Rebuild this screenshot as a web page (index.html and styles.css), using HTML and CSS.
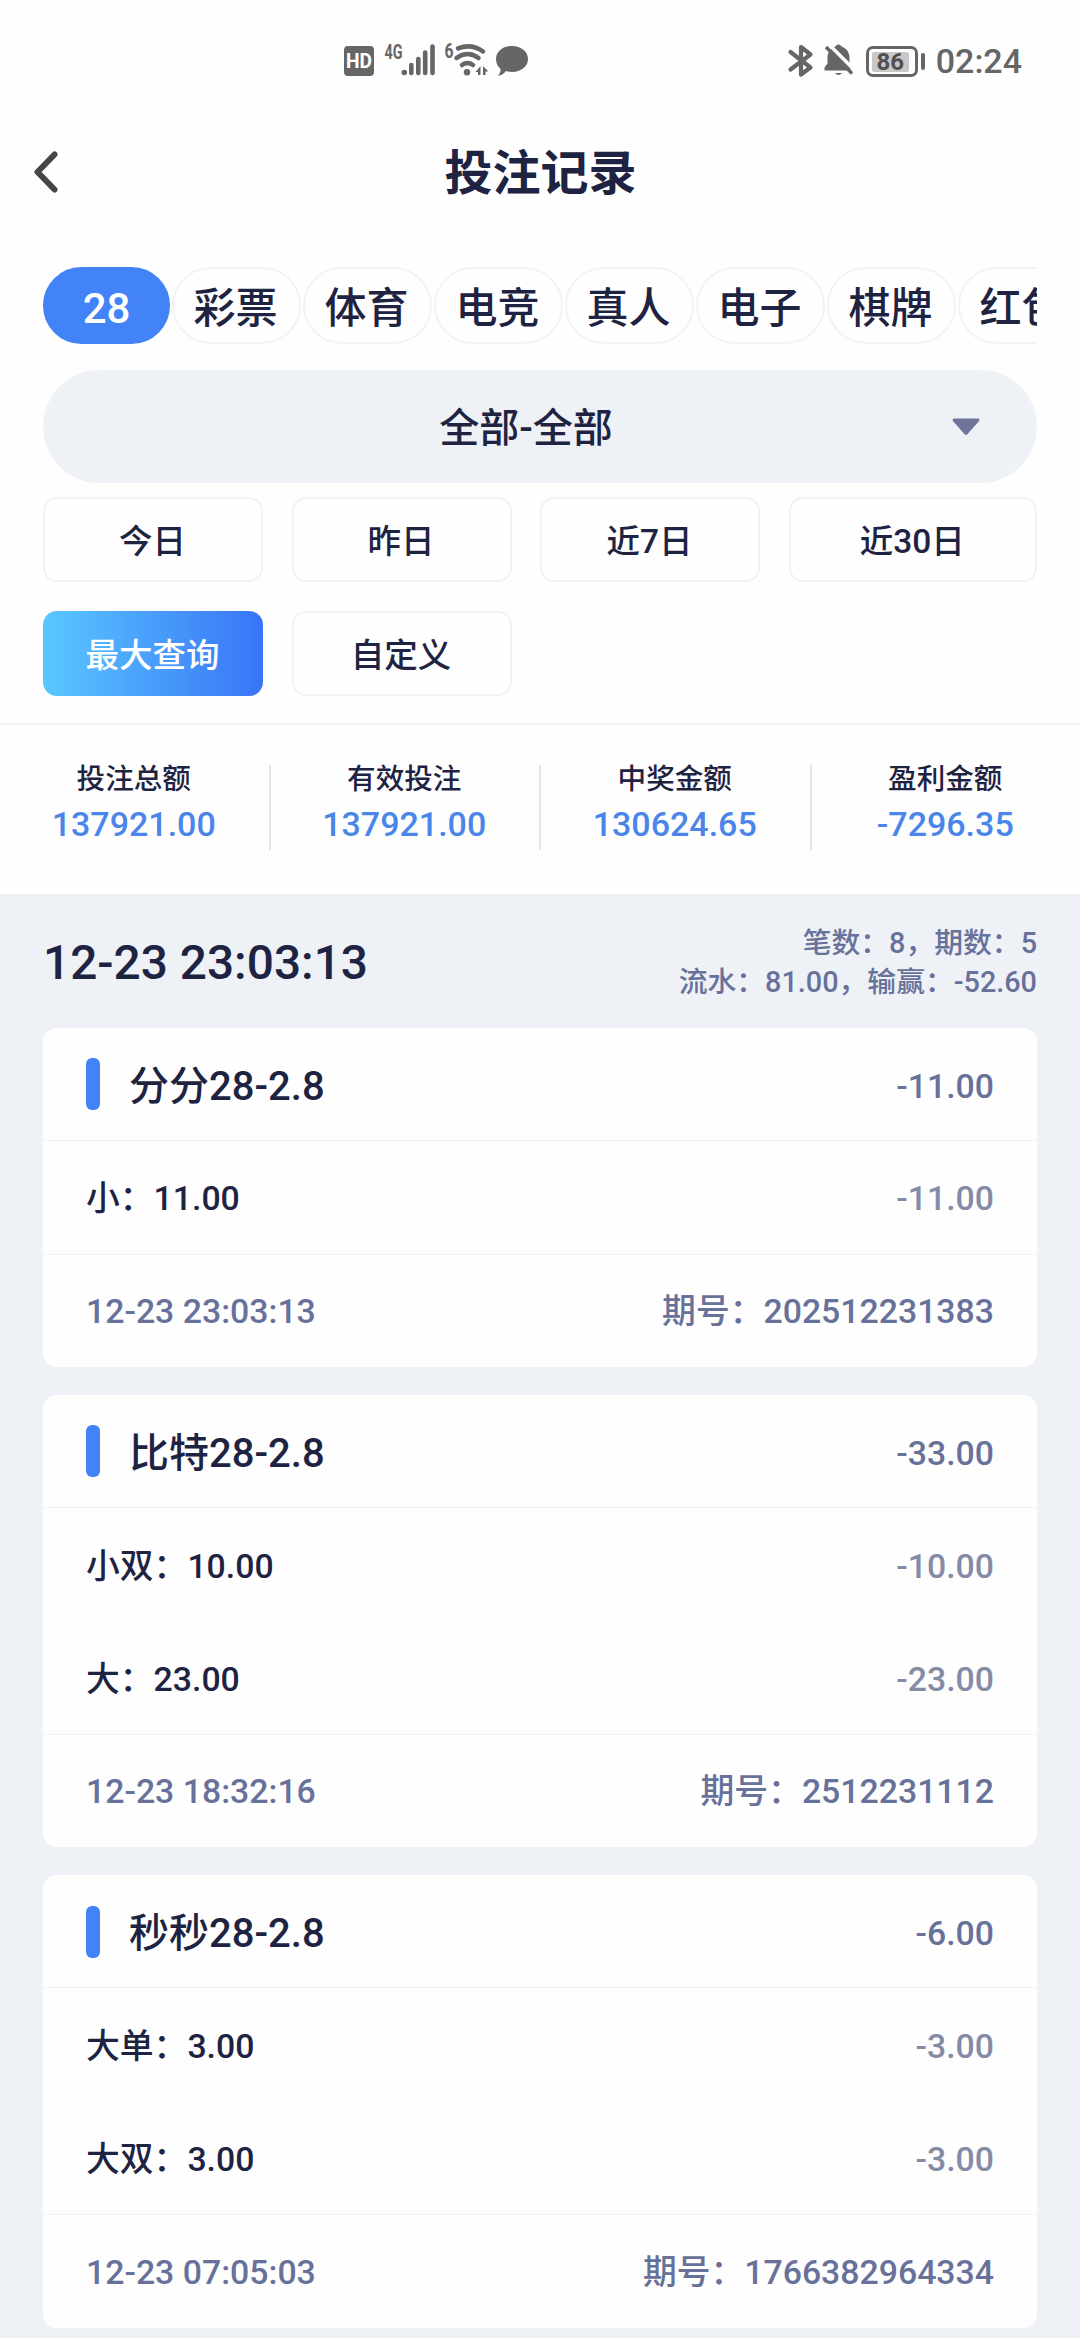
FILE: index.html
```html
<!DOCTYPE html>
<html lang="zh-CN">
  <head>
    <meta charset="UTF-8" />
    <meta name="viewport" content="width=device-width, initial-scale=1.0" />
    <title>投注记录</title>
    <link rel="stylesheet" href="styles.css">
  </head>

  <body>
    <!-- 状态栏 -->
    <div class="status">
      <svg class="status-left" width="190" height="40" viewBox="0 0 190 40">
        <rect x="4" y="6" width="30" height="30" rx="4" />
        <text class="hd" x="6" y="28" textLength="26" lengthAdjust="spacingAndGlyphs">HD</text>
        <text class="net" x="44.5" y="18.5" textLength="18" lengthAdjust="spacingAndGlyphs">4G</text>
        <circle cx="64.3" cy="32.5" r="2.8" />
        <path class="line" d="M71.3 25v8M78.3 19v14M85.2 12.5v20.5M92.5 6.5v26.5" />
        <text class="net" x="104.5" y="17.5" textLength="9" lengthAdjust="spacingAndGlyphs">6</text>
        <circle cx="127" cy="32.3" r="3.2" />
        <path class="line" d="M122 25q5.5-4 11 0M116.5 18q11-8 22 0M118 8.3q14-5 25 3.2" />
        <path d="M135.5 32l5-6v9H138v-3zM143 26l5.5 5.5h-3V35H143z" />
        <path d="M172 6c9 0 16 5.5 16 13s-7 13-16 13c-2 0-4-.3-6-1-2 2.5-4.5 4.5-8 4.8 1.8-2 2.6-4 2.6-6.8-3-2.5-4.6-6-4.6-10 0-7.5 7-13 16-13z" />
      </svg>
      <div class="status-right">
        <svg width="70" height="40" viewBox="0 0 70 40">
          <path class="bt" d="M6.5 11l20 15.5-9.5 7V6l9.5 7.500-20 15" />
          <path d="M54.5 3.5c-1.500 0-2.500 1-3 2-4.500 1.500-8 5.500-8 11v6l-3 4v3h26v-3l-1-4v-6c0-5.500-3.500-9.500-8-11-.5-1-1.500-2-3-2z" />
          <path d="M51 32h7q-3.5 4-7 0z" />
          <path class="slash-gap" d="M44.5 3l27 27" />
          <path class="slash" d="M42 6l26 26.5" />
        </svg>
        <div class="battery"><span>86</span></div>
        <span class="battery-tip"></span>
        <span class="clock">02:24</span>
      </div>
    </div>

    <header class="header">
      <svg class="back" width="30" height="48" viewBox="0 0 30 48">
        <path d="M25.5 6.5L8.5 24l17 17.5" />
      </svg>
      <h1>投注记录</h1>
    </header>

    <nav class="tabs">
      <span class="tab active">28</span>
      <span class="tab">彩票</span>
      <span class="tab">体育</span>
      <span class="tab">电竞</span>
      <span class="tab">真人</span>
      <span class="tab">电子</span>
      <span class="tab">棋牌</span>
      <span class="tab">红包</span>
    </nav>

    <div class="select">
      <span>全部-全部</span>
      <svg class="arrow" width="30" height="18" viewBox="0 0 30 18">
        <path d="M3 2h24L15 15.5z" />
      </svg>
    </div>

    <div class="dates">
      <div class="cell"><span class="date">今日</span></div>
      <div class="cell"><span class="date">昨日</span></div>
      <div class="cell"><span class="date">近7日</span></div>
      <div class="cell"><span class="date">近30日</span></div>
      <div class="cell"><span class="date active">最大查询</span></div>
      <div class="cell"><span class="date">自定义</span></div>
    </div>

    <div class="stats">
      <div class="stat"><span>投注总额</span><b>137921.00</b></div>
      <div class="stat"><span>有效投注</span><b>137921.00</b></div>
      <div class="stat"><span>中奖金额</span><b>130624.65</b></div>
      <div class="stat"><span>盈利金额</span><b>-7296.35</b></div>
    </div>

    <main class="list">
      <div class="summary">
        <h2>12-23 23:03:13</h2>
        <p>笔数：8，期数：5<br>流水：81.00，输赢：-52.60</p>
      </div>

      <section class="card">
        <div class="row title"><h3>分分28-2.8</h3><span>-11.00</span></div>
        <div class="row bet"><span>小：11.00</span><em>-11.00</em></div>
        <div class="row foot"><span>12-23 23:03:13</span><span>期号：202512231383</span></div>
      </section>

      <section class="card">
        <div class="row title"><h3>比特28-2.8</h3><span>-33.00</span></div>
        <div class="row bet"><span>小双：10.00</span><em>-10.00</em></div>
        <div class="row bet"><span>大：23.00</span><em>-23.00</em></div>
        <div class="row foot"><span>12-23 18:32:16</span><span>期号：2512231112</span></div>
      </section>

      <section class="card">
        <div class="row title"><h3>秒秒28-2.8</h3><span>-6.00</span></div>
        <div class="row bet"><span>大单：3.00</span><em>-3.00</em></div>
        <div class="row bet"><span>大双：3.00</span><em>-3.00</em></div>
        <div class="row foot"><span>12-23 07:05:03</span><span>期号：1766382964334</span></div>
      </section>
    </main>
  </body>
</html>
```

FILE: styles.css
```css
* {
  box-sizing: border-box;
}

body {
  margin: 0;
  height: 2338px;
  overflow: hidden;
  background: #fefefe;
  color: #1e2342;
  font-family: Roboto, "Noto Sans CJK SC", sans-serif;
  font-weight: 500;
  font-size: 33.8px;
}

h1,
h2,
h3,
p {
  margin: 0;
  font-weight: 500;
}

/* 状态栏 */
.status {
  display: flex;
  justify-content: space-between;
  height: 120px;
  padding: 40px 58px 0 340px;
  color: #666;
  fill: #666;
}

.status .line {
  fill: none;
  stroke: #666;
  stroke-width: 4.6;
  stroke-linecap: round;
}

.status .hd {
  fill: #fff;
  font-size: 20px;
  font-weight: 700;
}

.net {
  font-size: 20px;
  font-weight: 700;
}

.status-right {
  display: flex;
  align-items: center;
  height: 42px;
}

.bt {
  fill: none;
  stroke: #666;
  stroke-width: 4.2;
  stroke-linecap: round;
  stroke-linejoin: round;
}

.slash,
.slash-gap {
  fill: none;
  stroke: #666;
  stroke-width: 3.4;
}

.slash-gap {
  stroke: #fefefe;
}

.battery {
  width: 52px;
  height: 31px;
  margin-left: 12px;
  padding: 3px;
  border: 3px solid #666;
  border-radius: 7px;
}

.battery span {
  display: block;
  width: 37px;
  height: 20px;
  border-radius: 2px;
  background: #c8c8c8;
  color: #505050;
  font-size: 24px;
  font-weight: 700;
  line-height: 21px;
  text-align: center;
}

.battery-tip {
  width: 4px;
  height: 17px;
  margin: 0 11px 0 3px;
  border-radius: 2px;
  background: #666;
}

.clock {
  font-size: 34px;
}

/* 标题 */
.header {
  display: grid;
  grid-template-columns: 61px 1fr 60px;
  align-items: center;
  height: 103px;
  padding: 0 29px;
}

.header h1 {
  padding-top: 4px;
  font-size: 48px;
  font-weight: 700;
  line-height: 1;
  text-align: center;
}

.back {
  fill: none;
  stroke: #45454a;
  stroke-width: 6;
  stroke-linecap: round;
  stroke-linejoin: round;
}

/* 分类 */
.tabs {
  display: flex;
  gap: 2px;
  margin: 44px 43px 26px;
  overflow: hidden;
}

.tab {
  flex: 0 0 129px;
  height: 77px;
  border: 2px solid #f3f3f7;
  border-radius: 39px;
  font-size: 42px;
  line-height: 79px;
  text-align: center;
  text-indent: -2px;
}

.tab.active {
  flex-basis: 127px;
  border-color: #4283f7;
  background: #4283f7;
  color: #fff;
  text-indent: 0;
}

.select {
  display: grid;
  grid-template-columns: 58px 1fr 86px;
  align-items: center;
  height: 113px;
  margin: 0 43px;
  border-radius: 57px;
  background: #eef1f6;
  font-size: 40px;
  line-height: 1;
  text-align: center;
}

.select span {
  grid-column: 2;
  padding-top: 5px;
}

.arrow {
  fill: #70749a;
  stroke: #70749a;
  stroke-width: 3;
  stroke-linejoin: round;
}

/* 日期 */
.dates {
  display: grid;
  grid-template-columns: repeat(4, 1fr);
  gap: 29px 0;
  padding: 14px 43px 27px;
  border-bottom: 2px solid #f1f1f4;
}

.cell {
  padding-right: 28.5px;
}

.cell:nth-child(4) {
  padding-right: 0;
}

.date {
  display: block;
  height: 85px;
  border: 2px solid #f1f2f7;
  border-radius: 14px;
  font-size: 33.5px;
  line-height: 86px;
  text-align: center;
  text-indent: -1px;
}

.date.active {
  border: 0;
  background: linear-gradient(90deg, #5ac8ff, #3874f7);
  color: #fff;
  line-height: 90px;
}

/* 统计 */
.stats {
  display: flex;
  height: 169px;
  padding-top: 40px;
}

.stat {
  flex: 1;
  display: flex;
  flex-direction: column;
  height: 85px;
  border-right: 2px solid #e6e6ea;
  text-align: center;
  text-indent: -1px;
}

.stat:last-child {
  border: 0;
}

.stat span {
  font-size: 28.6px;
  line-height: 28px;
}

.stat b {
  margin-top: 11px;
  color: #4a86ea;
  font-size: 34px;
  font-weight: 500;
  line-height: 40px;
}

/* 列表 */
.list {
  height: 1444px;
  padding: 0 43px;
  background: #eef1f6;
}

.summary {
  display: flex;
  justify-content: space-between;
  align-items: center;
  height: 133.5px;
  padding-top: 4px;
}

.summary h2 {
  font-size: 47.8px;
}

.summary p {
  color: #67719a;
  font-size: 28.8px;
  line-height: 38.5px;
  text-align: right;
}

.card {
  margin-bottom: 28px;
  border-radius: 14px;
  background: #fefefe;
}

.row {
  display: flex;
  justify-content: space-between;
  align-items: center;
  height: 113.1px;
  padding: 2px 43px 0;
  line-height: 1;
}

.title {
  padding-top: 6px;
  border-bottom: 1px solid #f1f2f5;
  color: #67719a;
}

.title h3 {
  display: flex;
  align-items: center;
  color: #1e2342;
  font-size: 40px;
}

.title h3::before {
  content: "";
  width: 14px;
  height: 52px;
  margin: 0 29px 5px 0;
  border-radius: 6px;
  background: #4283f7;
}

.bet {
  padding-top: 4px;
}

.bet em {
  color: #858aa5;
  font-style: normal;
}

.foot {
  border-top: 1px solid #f1f2f5;
  color: #67719a;
}
```
